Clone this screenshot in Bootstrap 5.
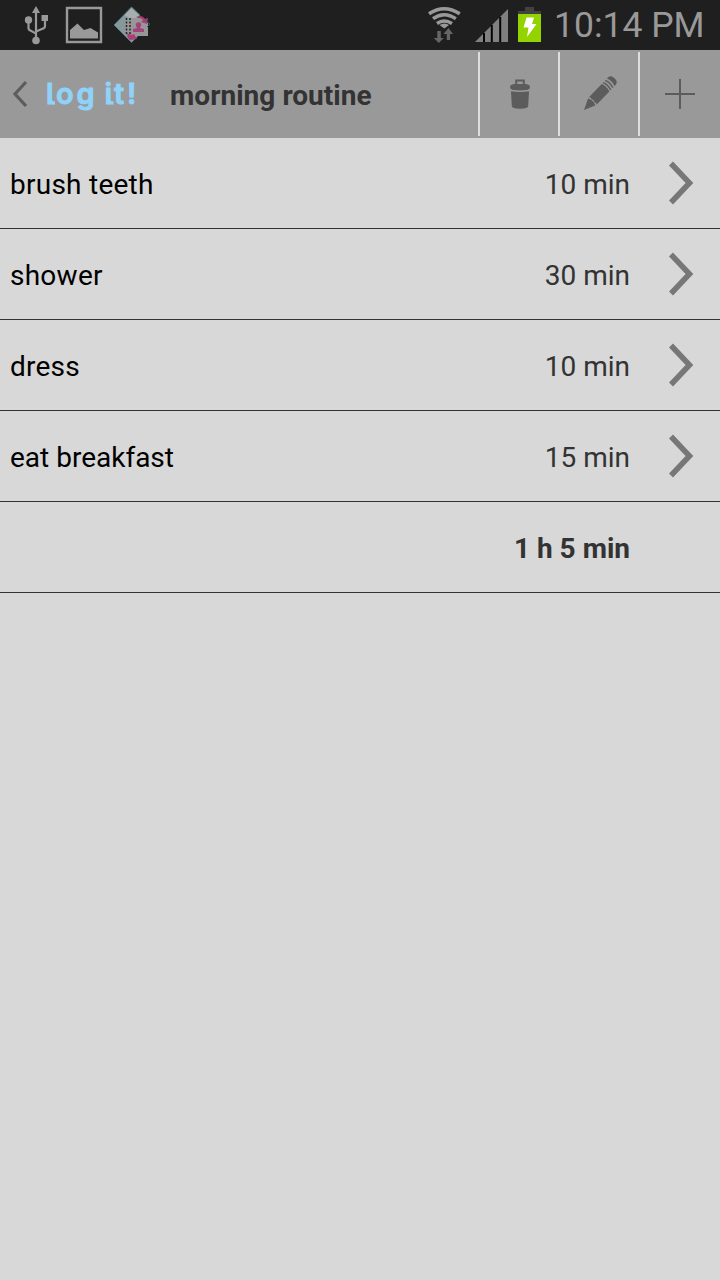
<!DOCTYPE html>
<html lang="en">
<head>
<meta charset="utf-8">
<meta name="viewport" content="width=device-width, initial-scale=1">
<title>log it! – morning routine</title>
<link rel="stylesheet" href="https://cdn.jsdelivr.net/npm/bootstrap@5.3.0/dist/css/bootstrap.min.css">
<style>
body{background:#d8d8d8;font-family:Roboto,"Noto Sans",sans-serif;font-size:28px;line-height:1.5;color:#333;min-height:100vh}
svg{display:block;flex:none}
.statusbar{height:50px;background:#1f1f1f;color:#999}
.clock{font-size:35.5px;line-height:50px;width:166px;white-space:nowrap}
.topbar{height:88px;background:#999}
.topbar h1{font-size:28px;font-weight:700;line-height:86px;padding-top:4px;color:#333;white-space:nowrap;letter-spacing:.04px}
.tool{width:80px;height:84px;border:0;border-left:2px solid #dedede;background:none;padding:0;color:#5c5c5c}
.tool:last-child{width:82px}
.step{height:91px;padding:0 0 0 10px;background:transparent;color:#000}
.list-group-flush>.list-group-item.step{border:0;border-bottom:1px solid #333}
.step .label,.step .time{line-height:90px;padding-top:2px;white-space:nowrap}
.step .label{letter-spacing:.25px}
.step .time{color:#333;width:200px;text-align:right}
.step .go{width:90px}
</style>
</head>
<body>
<header>
<div class="statusbar d-flex">
  <svg width="160" height="50" viewBox="0 0 160 50">
    <g fill="#999" stroke="none"><path d="M36 6l4 7h-8z"/><circle cx="36" cy="40.5" r="3.8"/><circle cx="28.5" cy="20" r="3.7"/><path d="M41.500 15h6.500v6h-6.500z"/></g>
    <path d="M36 11v28M28.500 21v7q0 2 2 2.600l5.500 3M45 20v6q0 2-2 2.600l-7 3" fill="none" stroke="#999" stroke-width="2.200"/>
    <path d="M67 8h34v34H67z" fill="none" stroke="#999" stroke-width="2.400"/>
    <path d="M70 38.500v-8.500l7.500-6.500 6.500 6.500 6.500-2 7.500 4.500v6z" fill="#999"/>
    <path d="M131.500 7l8.500 8-8 10L140 34l-8.500 8.500L114 25z" fill="#87989c" stroke="#4b747b"/>
    <path d="M131.500 8l8 8-7 4-8-5z" fill="#a8adaf"/>
    <path d="M125 18h18l5 5v13h-13l-10-4z" fill="#979797"/>
    <path d="M126.500 18v16M130 18v16" stroke="#252525" stroke-width="1.500" stroke-dasharray="2 1.500"/>
    <path d="M136 17q6-3 9 2l3-1-1 6-6-2 2-2q-3-3-7-3M127 33q4 3 7 1l3 5-7 1q-3-2-3-7" fill="#ad3d77"/>
    <circle cx="138.500" cy="25" r="2.700" fill="#a1447a"/>
    <path d="M137 26h3v2l4 1v3h-11v-3l4-1z" fill="#a1447a"/>
    <path d="M145 20l5 4-3 3" fill="none" stroke="#315e65"/>
  </svg>
  <svg class="ms-auto" width="134" height="50" viewBox="420 0 134 50">
    <g fill="none" stroke="#999" stroke-width="3.500"><path d="M429 13.700q15-10 30.800 0M433 18.700q11-8 22.800 0M437 23.500q7-5 15 0"/></g>
    <path d="M439.500 25q5-3 9.500 0L444.300 28.500z" fill="#999"/>
    <path d="M437.300 31h3.500v7h3l-5 5-5-5h3.500zM446.800 40v-6h-3.300l5-6 4.500 6h-3v6z" fill="#666"/>
    <path d="M475 42L508 9v33z" fill="#808080"/>
    <path d="M484 33v9M491.800 25v17M500.200 17v25" stroke="#050505" stroke-width="2"/>
    <path d="M525 7h9v4h7v3h-23v-3h7z" fill="#424242"/><path d="M518 14h23v28h-23z" fill="#92d300"/>
    <path d="M526.500 17.500h7.500L532 24h4.500L527 37l1.500-9.500h-5z" fill="#fff"/>
  </svg>
  <div class="clock">10:14 PM</div>
</div>
<nav class="topbar d-flex align-items-center">
  <svg width="170" height="88" viewBox="0 50 170 88" role="img" aria-label="Back to log it!">
    <path d="M26 82L15 94l11 12" fill="none" stroke="#5c5c5c" stroke-width="3.200"/>
    <text y="104" x="46 56 76.500 104.500 114 127" font-family="Inter,sans-serif" font-weight="600" font-size="29" fill="#8fd3fa" stroke="#8fd3fa" stroke-width=".9">logit!</text>
    <path d="M50 100q0 3 5 3M108.500 100q0 3 5 3" fill="none" stroke="#8fd3fa" stroke-width="3.500"/>
  </svg>
  <h1 class="m-0 flex-grow-1">morning routine</h1>
  <button class="tool d-flex" aria-label="Delete"><svg width="78" height="84" viewBox="480 52 78 84" fill="currentColor"><path d="M516.200 84v-3.500h7.600V84" fill="none" stroke="currentColor" stroke-width="2"/><path d="M514 84h12q4 .5 4 3 0 2.500-4 3-6 .8-12 0-4-.5-4-3 0-2.500 4-3zM511 91.300q9 1.300 18 0l-.8 14.700q-.3 2.700-8.200 2.700t-8.200-2.700z"/></svg></button>
  <button class="tool d-flex" aria-label="Edit"><svg width="78" height="84" viewBox="560 52 78 84"><g transform="translate(584 110) rotate(-46)" fill="currentColor"><path d="M0 0L11-5Q14 0 11 5zM12.500-5.300H31Q33 0 31 5.300H12.500Q14.700 3 12.500 2 15 0 12.500-2 14.700-3 12.500-5.300zM38.500-5.300H40Q44-5.300 44 0T40 5.300H38.500Q40.500 0 38.500-5.300z"/><path d="M33-5.300q2 5.300 0 10.600M36-5.300q2 5.300 0 10.600" fill="none" stroke="currentColor" stroke-width="1.500"/></g></svg></button>
  <button class="tool d-flex" aria-label="Add"><svg width="80" height="84" viewBox="640 52 80 84"><path d="M680 79v30M665 94h30" stroke="currentColor" stroke-width="2"/></svg></button>
</nav>
</header>
<main class="list-group list-group-flush rounded-0">
  <a class="step list-group-item d-flex"><span class="label flex-grow-1">brush teeth</span><span class="time">10 min</span><svg class="go" height="90" viewBox="0 0 90 90"><path d="M41 25.500L59.500 45 41 64.500" fill="none" stroke="#777" stroke-width="5.500"/></svg></a>
  <a class="step list-group-item d-flex"><span class="label flex-grow-1">shower</span><span class="time">30 min</span><svg class="go" height="90" viewBox="0 0 90 90"><path d="M41 25.500L59.500 45 41 64.500" fill="none" stroke="#777" stroke-width="5.500"/></svg></a>
  <a class="step list-group-item d-flex"><span class="label flex-grow-1">dress</span><span class="time">10 min</span><svg class="go" height="90" viewBox="0 0 90 90"><path d="M41 25.500L59.500 45 41 64.500" fill="none" stroke="#777" stroke-width="5.500"/></svg></a>
  <a class="step list-group-item d-flex"><span class="label flex-grow-1" style="letter-spacing:0">eat breakfast</span><span class="time">15 min</span><svg class="go" height="90" viewBox="0 0 90 90"><path d="M41 25.500L59.500 45 41 64.500" fill="none" stroke="#777" stroke-width="5.500"/></svg></a>
  <div class="step list-group-item d-flex"><span class="label flex-grow-1"></span><span class="time fw-bold">1 h 5 min</span><span class="go"></span></div>
</main>
<script src="https://cdn.jsdelivr.net/npm/bootstrap@5.3.0/dist/js/bootstrap.bundle.min.js"></script>
</body>
</html>
